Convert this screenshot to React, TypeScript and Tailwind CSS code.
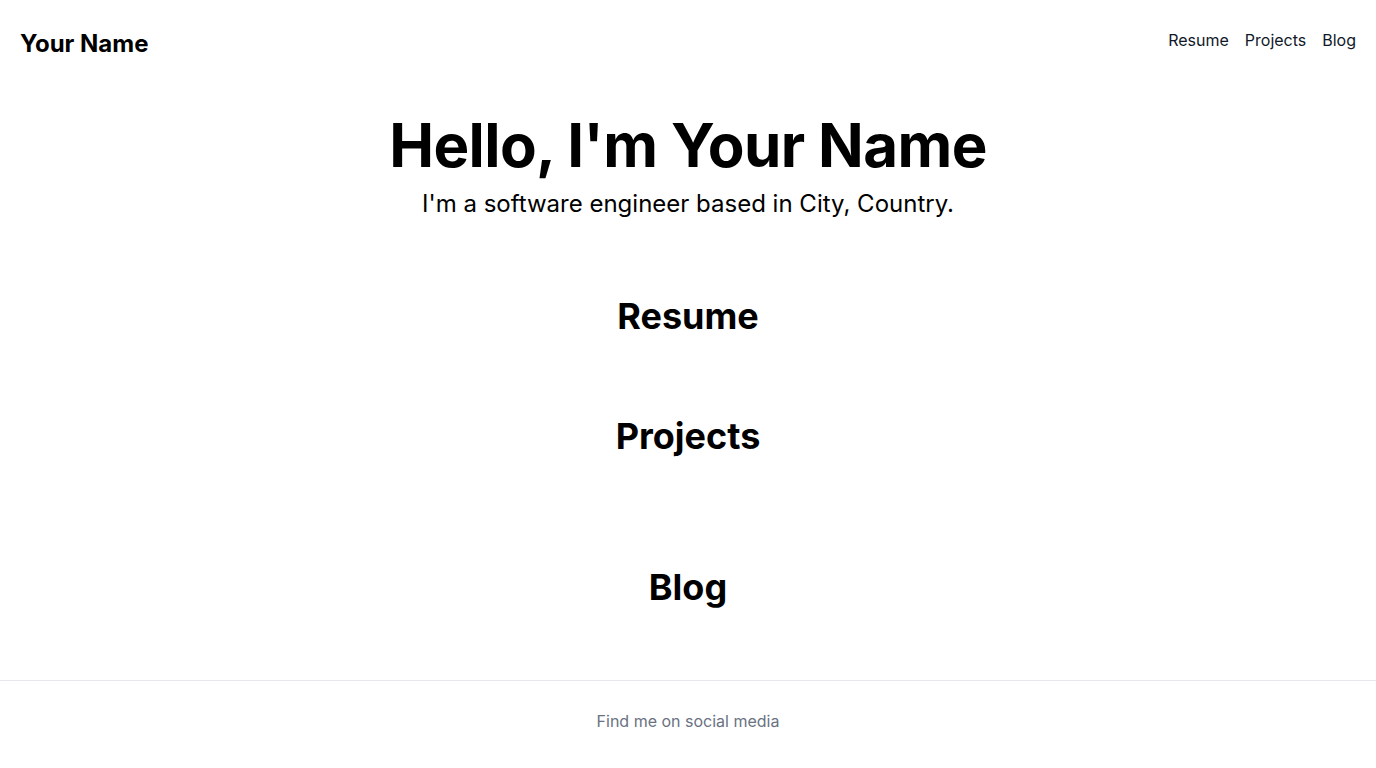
const navLinks = ["Resume", "Projects", "Blog"];

export default function App() {
  return (
    <div className="min-h-screen bg-white text-black font-['Inter',sans-serif] flex flex-col">
      <header className="flex justify-between items-start px-5 pt-[28px]">
        <a href="#" className="text-2xl font-bold leading-8">Your Name</a>
        <nav className="flex gap-4 text-base leading-6 text-gray-900">
          {navLinks.map((l) => (
            <a key={l} href={`#${l.toLowerCase()}`}>{l}</a>
          ))}
        </nav>
      </header>

      <main className="flex-1 flex flex-col items-center text-center">
        <section className="mt-[55px]">
          <h1 className="text-6xl font-bold leading-none tracking-[-0.6px]">Hello, I'm Your Name</h1>
          <p className="mt-[13px] text-2xl leading-8">I'm a software engineer based in City, Country.</p>
        </section>

        <section id="resume" className="mt-[76px]">
          <h2 className="text-4xl font-bold leading-10">Resume</h2>
        </section>

        <section id="projects" className="mt-[80px]">
          <h2 className="text-4xl font-bold leading-10">Projects</h2>
        </section>

        <section id="blog" className="mt-[111px] mb-[60px]">
          <h2 className="text-4xl font-bold leading-10">Blog</h2>
        </section>
      </main>

      <footer className="border-t border-gray-200 pt-7 pb-[35px] text-center">
        <p className="text-base leading-6 text-gray-500">Find me on social media</p>
      </footer>
    </div>
  );
}
